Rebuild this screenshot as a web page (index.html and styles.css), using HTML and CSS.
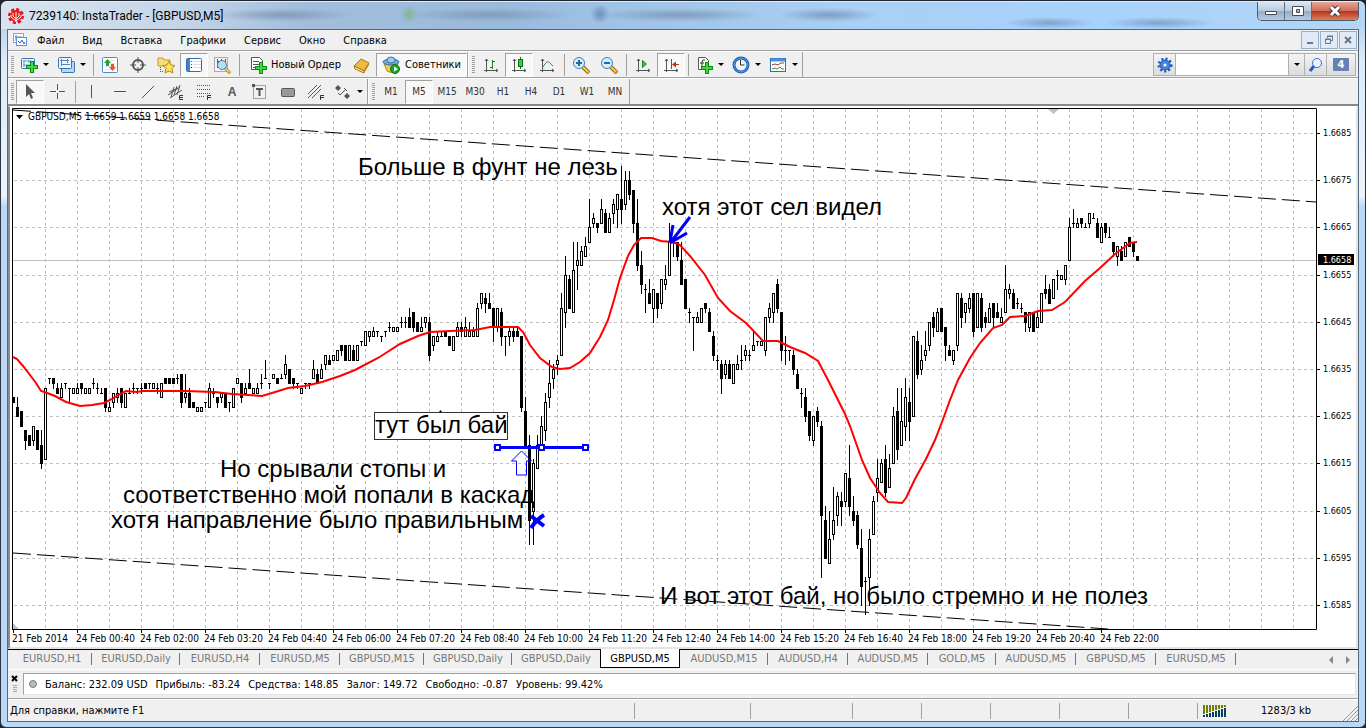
FILE: index.html
```html
<!DOCTYPE html>
<html lang="ru">

<head>
  <meta charset="utf-8">
  <title>7239140: InstaTrader - [GBPUSD,M5]</title>
  <link rel="stylesheet" href="styles.css">
</head>

<body>
  <svg class="sprite" aria-hidden="true">
    <symbol id="i-newchart" viewBox="0 0 18 18">
      <rect x="1.500" y="2.500" width="13" height="10" rx="1" fill="#eef6fd" stroke="#3b76ae"/>
      <path d="M4 4v7M3 9h10M3 5h8M9 4v3" stroke="#6a9cc8" fill="none"/>
      <path d="M10 5h4v4h4v4h-4v4h-4v-4H6V9h4z" fill="#0b8b14"/><path d="M11 6h2v4h4v2h-4v4h-2v-4H7v-2h4z" fill="#3ddb3c"/>
    </symbol>
    <symbol id="i-profiles" viewBox="0 0 18 18">
      <rect x="4.500" y="5.500" width="13" height="11" rx="1" fill="#b9d6f0" stroke="#3b76ae"/>
      <rect x="1.500" y="1.500" width="13" height="11" rx="1" fill="#eef6fd" stroke="#3b76ae"/>
      <path d="M4.500 3v7M3 4.500h9M4 8.500h9M10.500 3v4" stroke="#5586b5" fill="none"/>
    </symbol>
    <symbol id="i-market" viewBox="0 0 18 18">
      <rect x="1.500" y="1.500" width="15" height="15" rx="1" fill="#fff" stroke="#4a8ccb"/>
      <path d="M4 4.500h10M4 7.500h10M4 10.500h10M4 13.500h10" stroke="#dde8f2"/>
      <path d="M3 7l3.500-4L10 7H8v3H5V7z" fill="#22a32a"/><path d="M8 11l3.500 4 3.500-4h-2V8h-3v3z" fill="#e25a2c"/>
    </symbol>
    <symbol id="i-cross" viewBox="0 0 18 18"><circle cx="9" cy="9" r="5" fill="none" stroke="#555" stroke-width="2"/><path d="M9 1v6M9 11v6M1 9h6M11 9h6" stroke="#555"/></symbol>
    <symbol id="i-favs" viewBox="0 0 18 18">
      <path d="M1 2h5l1 2h6v6H1z" fill="#f7dc7c" stroke="#c99a2b"/><path d="M3.500 11v5M3 15.500h4" stroke="#555" stroke-dasharray="1 1" fill="none"/>
      <path d="M12 5l2 4 4 .5-3 3 1 4.500-4-2-4 2 1-4.500-3-3 4-.5z" fill="#ffe05a" stroke="#b98612"/>
    </symbol>
    <symbol id="i-data" viewBox="0 0 18 18">
      <rect x="1.500" y="2.500" width="15" height="13" rx="1" fill="#fff" stroke="#2f6db0"/><rect x="2" y="3" width="3" height="12" fill="#3f85cc"/>
      <path d="M6 5.500h1M6 8.500h1" stroke="#e02020"/><path d="M6 11.500h1" stroke="#123"/><path d="M8 5.500h8M8 8.500h8M8 11.500h8" stroke="#cfe0f0"/>
    </symbol>
    <symbol id="i-tester" viewBox="0 0 18 18">
      <rect x="1.500" y="1.500" width="13" height="14" fill="#f4f4f4" stroke="#aaa"/><path d="M4.500 3v9M8.500 3v3M12.500 3v5M4 5.500h3" stroke="#555"/>
      <path d="M12 12l5 5" stroke="#8a6a10" stroke-width="3"/><path d="M12 12l4.500 4.500" stroke="#f2cf4c" stroke-width="2"/><circle cx="9" cy="9" r="4.500" fill="#b9dcf5" stroke="#4b7fae"/>
    </symbol>
    <symbol id="i-order" viewBox="0 0 18 18">
      <path d="M2.500 1.500h8l3 3v9h-11z" fill="#fff" stroke="#555"/><path d="M4 5.500h6M4 8.500h6M4 11.500h4" stroke="#555"/>
      <path d="M10 6h4v4h4v4h-4v4h-4v-4H6v-4h4z" fill="#0b8b14"/><path d="M11 7h2v4h4v2h-4v4h-2v-4H7v-2h4z" fill="#3ddb3c"/>
    </symbol>
    <symbol id="i-book" viewBox="0 0 18 18"><path d="M1 10l7-7 8 4-5 8z" fill="#eebc3d" stroke="#a8720e"/><path d="M1 10l10 5v2L2 13z" fill="#fdf0c4" stroke="#a8720e"/><path d="M11 15l5-8v2l-5 8z" fill="#b97c12"/></symbol>
    <symbol id="i-advisor" viewBox="0 0 18 18">
      <path d="M2 8l3 7q4 3 8 0l3-7z" fill="#f0cb4a" stroke="#b98a1d"/>
      <ellipse cx="9" cy="6" rx="8" ry="3" fill="#68a9db" stroke="#3573ab"/><ellipse cx="9" cy="4" rx="4" ry="3" fill="#9ccbee" stroke="#3573ab"/>
      <circle cx="13" cy="13" r="4.500" fill="#1fa52a" stroke="#0c7315"/><path d="M12 10.500v5l4-2.500z" fill="#fff"/>
    </symbol>
    <symbol id="i-bars" viewBox="0 0 18 18"><path d="M4.500 3v13M2 14.500h14M3 5l1.500-2L6 5M14 13l2 1.500-2 1.500" stroke="#555" fill="none"/><path d="M10.500 4v9M8 11.500h3M10 5.500h3" stroke="#16852a" fill="none"/></symbol>
    <symbol id="i-candles" viewBox="0 0 18 18"><path d="M4.500 3v13M2 14.500h14M3 5l1.500-2L6 5M14 13l2 1.500-2 1.500" stroke="#555" fill="none"/><path d="M10.500 1v12" stroke="#0d6c18"/><rect x="8.500" y="3.500" width="4" height="7" fill="#35d43a" stroke="#0d6c18"/></symbol>
    <symbol id="i-line" viewBox="0 0 18 18"><path d="M4.500 3v13M2 14.500h14M3 5l1.500-2L6 5M14 13l2 1.500-2 1.500" stroke="#555" fill="none"/><path d="M5 11q4-8 7-4l3 3" stroke="#2b9a3a" fill="none"/></symbol>
    <symbol id="i-zoomin" viewBox="0 0 18 18"><path d="M11 11l6 6" stroke="#8a6a10" stroke-width="4"/><path d="M11 11l5.500 5.500" stroke="#f2cf4c" stroke-width="2"/><circle cx="7" cy="7" r="5.500" fill="#d8edfb" stroke="#3a80bd"/><path d="M4 7h6M7 4v6" stroke="#2567a4" stroke-width="2"/></symbol>
    <symbol id="i-zoomout" viewBox="0 0 18 18"><path d="M11 11l6 6" stroke="#8a6a10" stroke-width="4"/><path d="M11 11l5.500 5.500" stroke="#f2cf4c" stroke-width="2"/><circle cx="7" cy="7" r="5.500" fill="#d8edfb" stroke="#3a80bd"/><path d="M4 7h6" stroke="#2567a4" stroke-width="2"/></symbol>
    <symbol id="i-scroll" viewBox="0 0 18 18"><path d="M4.500 3v13M2 14.500h14M3 5l1.500-2L6 5M14 13l2 1.500-2 1.500" stroke="#555" fill="none"/><path d="M8.500 4.500v7l4-3.500z" fill="#35d43a" stroke="#16852a"/></symbol>
    <symbol id="i-shift" viewBox="0 0 18 18"><path d="M4.500 3v13M2 14.500h14M3 5l1.500-2L6 5M14 13l2 1.500-2 1.500M9.500 3v10" stroke="#555" fill="none"/><path d="M17 8.500h-5" stroke="#b8330b"/><path d="M10 8.500l4-3v6z" fill="#b8330b"/></symbol>
    <symbol id="i-indic" viewBox="0 0 18 18">
      <path d="M3.500 1.500h7l3 3v9h-10z" fill="#fff" stroke="#555"/><path d="M10 4q-3-1-3 2v5M5 7h4" stroke="#333" fill="none"/>
      <path d="M10 6h4v4h4v4h-4v4h-4v-4H6v-4h4z" fill="#0b8b14"/><path d="M11 7h2v4h4v2h-4v4h-2v-4H7v-2h4z" fill="#3ddb3c"/>
    </symbol>
    <symbol id="i-clock" viewBox="0 0 18 18"><circle cx="9" cy="9" r="7" fill="#eef6fd" stroke="#1d5cae" stroke-width="3"/><circle cx="9" cy="9" r="7" fill="none" stroke="#5aa2ea"/><path d="M8.500 4v5h4" stroke="#333" fill="none"/></symbol>
    <symbol id="i-template" viewBox="0 0 18 18"><rect x="1.500" y="2.500" width="15" height="13" fill="#fff" stroke="#2f6db0"/><path d="M2 4h14" stroke="#4b94dd" stroke-width="3"/><path d="M3 9l3-1 3 1 3-2h3" stroke="#a33a20" fill="none"/><path d="M3 13l3-1 2 1 3-2 2 2h2" stroke="#2b9a3a" fill="none"/></symbol>
    <symbol id="i-cursor" viewBox="0 0 18 18"><path d="M5 1l9 9h-4l2 5-2 1-2-5-3 3z" fill="#555"/></symbol>
    <symbol id="i-crosshair" viewBox="0 0 18 18"><path d="M8.500 1v6M8.500 10v6M1 8.500h6M10 8.500h6" stroke="#555"/></symbol>
    <symbol id="i-vline" viewBox="0 0 18 18"><path d="M8.500 2v13" stroke="#555"/></symbol>
    <symbol id="i-hline" viewBox="0 0 18 18"><path d="M3 8.500h12" stroke="#555"/></symbol>
    <symbol id="i-trend" viewBox="0 0 18 18"><path d="M3 15L15 3" stroke="#555"/></symbol>
    <symbol id="i-channel" viewBox="0 0 18 18"><path d="M1 12L13 4M3 15L15 7M4 14L7 4M7 12L10 3M10 12l3-10M2 9l9-4" stroke="#555"/><path d="M16 12.500h-3.500v4H16M13 14.500h3" stroke="#333" fill="none"/></symbol>
    <symbol id="i-fibo" viewBox="0 0 18 18"><path d="M2 2.500h13M2 6.500h13M2 10.500h13M2 13.500h8" stroke="#555" stroke-dasharray="1 1"/><path d="M16 12.500h-3.500V17M13 14.500h3" stroke="#333" fill="none"/></symbol>
    <symbol id="i-label" viewBox="0 0 18 18"><rect x="2.500" y="2.500" width="12" height="13" fill="none" stroke="#555" stroke-dasharray="1 1"/><path d="M5 6h7M8.500 6v7" stroke="#555" stroke-width="2"/><path d="M1 1h3v3H1z" fill="#555"/></symbol>
    <symbol id="i-rect" viewBox="0 0 18 18"><rect x="2.500" y="5.500" width="13" height="8" rx="1" fill="#999" stroke="#555"/></symbol>
    <symbol id="i-fan" viewBox="0 0 18 18"><path d="M1 11L10 2M1 15L14 2M5 15l9-9" stroke="#555"/><path d="M17 12.500h-3.500V17M14 14.500h3" stroke="#333" fill="none"/></symbol>
    <symbol id="i-arrows" viewBox="0 0 18 18"><path d="M1 5l3-3 3 3-3 3zM10 13l3-3 3 3-3 3z" fill="#555"/><path d="M4 10l2 2 6-6M10 5l3 3" stroke="#555" fill="none"/></symbol>
    <symbol id="i-gear" viewBox="0 0 16 16"><circle cx="8" cy="8" r="6" fill="none" stroke="#1f58b8" stroke-width="3" stroke-dasharray="2 2"/><circle cx="8" cy="8" r="5" fill="#4585dc" stroke="#1f58b8"/><circle cx="8" cy="8" r="1.500" fill="#fff"/></symbol>
    <symbol id="i-search" viewBox="0 0 16 16"><path d="M6 9l-4 5" stroke="#2a5bc0" stroke-width="3"/><circle cx="9" cy="6" r="4.500" fill="#eaf3fd" stroke="#3b6fd0"/></symbol>
    <symbol id="i-logo" viewBox="0 0 16 16"><circle cx="8" cy="8" r="6" fill="#e01a1a"/><circle cx="8" cy="8" r="6.500" fill="none" stroke="#e01a1a" stroke-width="3" stroke-dasharray="3 2"/><path d="M8 4v10M5 5v3l3 3M11 5v3l-3 3M3 7v2l5 4M13 7v2l-5 4" stroke="#fff" fill="none"/></symbol>
    <symbol id="i-doc" viewBox="0 0 16 16"><rect x="1.500" y="1.500" width="10" height="9" fill="#fff" stroke="#7aa7e8"/><path d="M4 3v6M3 5h7" stroke="#4c82d4"/><rect x="4.500" y="5.500" width="10" height="8" fill="#fff" stroke="#5e92dc"/><path d="M6 9l2 2 2-3 2 4 1-2" stroke="#3569c4" fill="none"/></symbol>
  </svg>

  <div class="window">
    <header class="titlebar">
      <svg class="logo"><use href="#i-logo"/></svg>
      <h1>7239140: InstaTrader - [GBPUSD,M5]</h1>
      <div class="haze"></div>
      <div class="caption">
        <button type="button" aria-label="Свернуть"><svg viewBox="0 0 14 12"><path d="M1.500 6.500h11v3h-11z" fill="#fff" stroke="#444a58"/></svg></button>
        <button type="button" aria-label="Развернуть"><svg viewBox="0 0 14 12"><path d="M1.500 1.500h11v9h-11zM5.500 4.500h3v3h-3z" fill="#fff" stroke="#444a58" fill-rule="evenodd"/></svg></button>
        <button type="button" class="close" aria-label="Закрыть"><svg viewBox="0 0 14 12"><path d="M3 2l8 8M11 2l-8 8" stroke="#4a3038" stroke-width="5"/><path d="M3 2l8 8M11 2l-8 8" stroke="#fff" stroke-width="3"/></svg></button>
      </div>
    </header>

    <div class="client">
      <nav class="menu">
        <svg><use href="#i-doc"/></svg>
        <button type="button">Файл</button>
        <button type="button">Вид</button>
        <button type="button">Вставка</button>
        <button type="button">Графики</button>
        <button type="button">Сервис</button>
        <button type="button">Окно</button>
        <button type="button">Справка</button>
        <div class="mdi">
          <button type="button" aria-label="Свернуть окно"><svg viewBox="0 0 10 10"><path d="M2 8h6" stroke="#66788a" stroke-width="2"/></svg></button>
          <button type="button" aria-label="Восстановить окно"><svg viewBox="0 0 10 10"><path d="M3.500 3V1.500h5v4H7M1.500 4.500h5v4h-5z" stroke="#66788a" fill="none"/><path d="M1 4h6M3 1h6" stroke="#66788a"/></svg></button>
          <button type="button" aria-label="Закрыть окно"><svg viewBox="0 0 10 10"><path d="M2 2l6 6M8 2l-6 6" stroke="#66788a" stroke-width="2"/></svg></button>
        </div>
      </nav>

      <div class="toolrow">
        <div class="toolbar">
          <button type="button" class="drop" aria-label="Новый график"><svg><use href="#i-newchart"/></svg></button>
          <button type="button" class="drop" aria-label="Профили"><svg><use href="#i-profiles"/></svg></button>
          <i class="sep"></i>
          <button type="button" aria-label="Обзор рынка"><svg><use href="#i-market"/></svg></button>
          <button type="button" aria-label="Окно данных"><svg><use href="#i-cross"/></svg></button>
          <button type="button" aria-label="Навигатор"><svg><use href="#i-favs"/></svg></button>
          <button type="button" class="on" aria-label="Терминал"><svg><use href="#i-data"/></svg></button>
          <button type="button" aria-label="Тестер стратегий"><svg><use href="#i-tester"/></svg></button>
          <i class="sep"></i>
          <button type="button" class="order"><svg><use href="#i-order"/></svg>Новый Ордер</button>
          <button type="button" aria-label="MetaEditor"><svg><use href="#i-book"/></svg></button>
          <button type="button" class="advisor on"><svg><use href="#i-advisor"/></svg>Советники</button>
        </div>
        <div class="toolbar">
          <button type="button" aria-label="Бары"><svg><use href="#i-bars"/></svg></button>
          <button type="button" class="on" aria-label="Свечи"><svg><use href="#i-candles"/></svg></button>
          <button type="button" aria-label="Линия"><svg><use href="#i-line"/></svg></button>
          <i class="sep"></i>
          <button type="button" aria-label="Увеличить"><svg><use href="#i-zoomin"/></svg></button>
          <button type="button" aria-label="Уменьшить"><svg><use href="#i-zoomout"/></svg></button>
          <i class="sep"></i>
          <button type="button" aria-label="Автопрокрутка"><svg><use href="#i-scroll"/></svg></button>
          <button type="button" class="on" aria-label="Сдвиг графика"><svg><use href="#i-shift"/></svg></button>
          <i class="sep"></i>
          <button type="button" class="drop" aria-label="Индикаторы"><svg><use href="#i-indic"/></svg></button>
          <button type="button" class="drop" aria-label="Периоды"><svg><use href="#i-clock"/></svg></button>
          <button type="button" class="drop" aria-label="Шаблоны"><svg><use href="#i-template"/></svg></button>
        </div>
        <form class="search">
          <button type="button" aria-label="Настройки"><svg><use href="#i-gear"/></svg></button>
          <input type="text" aria-label="Поиск">
          <button type="button" class="caret" aria-label="История"></button>
          <button type="button" aria-label="Найти"><svg><use href="#i-search"/></svg></button>
          <button type="button" class="msg"><span>4</span></button>
        </form>
      </div>

      <div class="toolrow">
        <div class="toolbar">
          <button type="button" class="on" aria-label="Курсор"><svg><use href="#i-cursor"/></svg></button>
          <button type="button" aria-label="Перекрестие"><svg><use href="#i-crosshair"/></svg></button>
          <i class="sep"></i>
          <button type="button" aria-label="Вертикальная линия"><svg><use href="#i-vline"/></svg></button>
          <button type="button" aria-label="Горизонтальная линия"><svg><use href="#i-hline"/></svg></button>
          <button type="button" aria-label="Трендовая линия"><svg><use href="#i-trend"/></svg></button>
          <button type="button" aria-label="Канал"><svg><use href="#i-channel"/></svg></button>
          <button type="button" aria-label="Фибоначчи"><svg><use href="#i-fibo"/></svg></button>
          <button type="button" class="letter">A</button>
          <button type="button" aria-label="Текстовая метка"><svg><use href="#i-label"/></svg></button>
          <button type="button" aria-label="Прямоугольник"><svg><use href="#i-rect"/></svg></button>
          <button type="button" aria-label="Веер"><svg><use href="#i-fan"/></svg></button>
          <button type="button" class="drop" aria-label="Стрелки"><svg><use href="#i-arrows"/></svg></button>
        </div>
        <div class="toolbar periods">
          <button type="button">M1</button>
          <button type="button" class="on">M5</button>
          <button type="button">M15</button>
          <button type="button">M30</button>
          <button type="button">H1</button>
          <button type="button">H4</button>
          <button type="button">D1</button>
          <button type="button">W1</button>
          <button type="button">MN</button>
        </div>
      </div>

      <main class="chart">
        <svg id="chart" viewBox="10 107 1346 540" role="img" aria-label="GBPUSD,M5">
          <g id="grid"></g>
          <path d="M12 260.500H1320" stroke="#c0c0c0"/>
          <path d="M1048 109h11l-5.500 5zM13 623v6h6z" fill="#c0c0c0"/>
          <g class="channel">
            <path d="M13 110L1316 202"/>
            <path d="M13 553L1108 629"/>
          </g>
          <g id="candles"></g>
          <polyline class="ma" points="13,357 17,359 23,366 30,375 36,383 41,391 47,393 55,396 66,402 80,406 92,405 104,403 112,399 118,395 126,391 137,392 143,391 185,391 215,392 232,394 262,396 272,393 288,388 305,386 322,382 340,376 355,370 378,358 400,344 418,336 430,332 450,331 475,330 490,327 518,327 523,332 530,345 540,358 552,367 560,369 570,368 580,362 590,353 600,337 608,320 614,300 620,278 628,256 634,245 641,238 652,238 661,241 672,242 680,245 690,256 705,275 718,298 730,311 746,323 763,341 778,341 790,347 805,353 818,361 828,380 845,414 850,426 862,460 870,478 880,493 888,502 902,503 906,498 915,479 926,459 935,440 942,422 950,400 958,380 970,358 980,343 993,328 1002,325 1010,317 1025,316 1038,311 1052,310 1065,302 1085,281 1100,268 1115,254 1130,243 1137,242"/>
          <path class="frame" d="M12.500 629V108.500H1316.500V629.500H12"/>
          <path d="M16 115h7l-3.500 4z"/>
          <text class="small" x="28" y="120">GBPUSD,M5 1.6659 1.6659 1.6658 1.6658</text>

          <rect x="374.500" y="412.500" width="133" height="27" fill="#fff" stroke="#333"/>
          <path d="M439 412l1.500-2 1.500 2z"/>
          <g class="note">
            <text x="358" y="175">Больше в фунт не лезь</text>
            <text x="662" y="215">хотя этот сел видел</text>
            <text x="375" y="433">тут был бай</text>
            <text x="220" y="477">Но срывали стопы и</text>
            <text x="123" y="503">соответственно мой попали в каскад</text>
            <text x="111" y="528">хотя направление было правильным</text>
            <text x="660" y="604">И вот этот бай, но было стремно и не полез</text>
          </g>

          <g class="blue">
            <path d="M497 447.500h89M690 217l-19 25M673 225l-3 17M687 233l-17 10" stroke-width="3"/>
            <path d="M521.500 451l-10 10h5v14h10v-14h5z" stroke-width="1"/>
            <path d="M531 516l13 10M544 515q-8 5-13 13" stroke-width="4"/>
          </g>
          <g class="knobs">
            <rect x="495" y="445" width="5" height="5"/>
            <rect x="539" y="445" width="5" height="5"/>
            <rect x="583" y="445" width="5" height="5"/>
          </g>
          <g id="axes" class="small"></g>
          <rect x="1318" y="254" width="36" height="11"/>
          <text class="price bid" x="1323" y="263">1.6658</text>
        </svg>
      </main>

      <nav class="tabs">
        <a href="#">EURUSD,H1</a>
        <a href="#" class="wide">EURUSD,Daily</a>
        <a href="#">EURUSD,H4</a>
        <a href="#">EURUSD,M5</a>
        <a href="#" class="mid">GBPUSD,M15</a>
        <a href="#" class="wide">GBPUSD,Daily</a>
        <a href="#" class="wide last">GBPUSD,Daily</a>
        <a href="#" class="active">GBPUSD,M5</a>
        <a href="#" class="wide">AUDUSD,M15</a>
        <a href="#">AUDUSD,H4</a>
        <a href="#">AUDUSD,M5</a>
        <a href="#" class="narrow">GOLD,M5</a>
        <a href="#">AUDUSD,M5</a>
        <a href="#">GBPUSD,M5</a>
        <a href="#">EURUSD,M5</a>
        <div class="arrows">
          <button type="button" aria-label="Назад"><svg viewBox="0 0 6 8"><path d="M5 0v8L1 4z" fill="#888"/></svg></button>
          <button type="button" aria-label="Вперёд"><svg viewBox="0 0 6 8"><path d="M1 0v8l4-4z" fill="#888"/></svg></button>
        </div>
      </nav>

      <section class="terminal">
        <button type="button" aria-label="Закрыть терминал"><svg viewBox="0 0 8 18"><path d="M1 1l5 5M6 1l-5 5" stroke="#000" stroke-width="2"/><path d="M2 10.500h4M2 12.500h4M2 14.500h4M2 16.500h4" stroke="#aaa"/></svg></button>
        <p><i class="dot"></i><span>Баланс: 232.09 USD</span><span>Прибыль: -83.24</span><span>Средства: 148.85</span><span>Залог: 149.72</span><span>Свободно: -0.87</span><span>Уровень: 99.42%</span></p>
      </section>

      <footer class="status">
        <span class="help">Для справки, нажмите F1</span>
        <span class="c1"></span>
        <span class="c2"></span>
        <span class="c3"></span>
        <span class="c3"></span>
        <span class="c3"></span>
        <span class="c3"></span>
        <span class="c3"></span>
        <span class="net"><svg id="signal" viewBox="0 0 24 12"></svg>1283/3 kb</span>
        <svg class="grip" viewBox="0 0 16 16"><path d="M1 16L16 1M5 16L16 5M9 16l7-7M13 16l3-3" stroke="#999"/></svg>
      </footer>
    </div>
  </div>
  <script src="chart.js"></script>
</body>

</html>
```
FILE: styles.css
```css
*,
*::before,
*::after {
  box-sizing: border-box;
}

body {
  margin: 0;
  min-height: 100vh;
  display: flex;
  background: #20242c;
  font-family: "DejaVu Sans Condensed", "Noto Sans", sans-serif;
  font-size: 11px;
  color: #000;
}

button {
  padding: 0;
  border: 0;
  background: none;
  font: inherit;
  color: inherit;
}

.sprite {
  position: absolute;
  width: 0;
  height: 0;
}

.window {
  flex: 1;
  min-width: 0;
  margin-top: 1px;
  display: flex;
  flex-direction: column;
  padding: 0 6px 5px;
  border: 1px solid #2c3540;
  border-top: 0;
  border-radius: 7px 7px 6px 6px;
  background: linear-gradient(180deg, #a8c4e2 0, #dcebfa 60px, #eaf4fd 195px, #b9d8f8 205px, #b9d8f8 100%);
}

/* title bar */
.titlebar {
  display: flex;
  align-items: center;
  height: 28px;
  margin: 0 -6px;
  padding-left: 7px;
  border-radius: 6px 6px 0 0;
  background: linear-gradient(90deg, #d9e4f0 0, #c4d5e8 180px, #a3bedb 300px, #9abadc 500px, #9fc3e6 620px, #a9d0f5 860px, #a6d2fb 1100px, #b5d6f5 1366px);
  border-top: 1px solid #e2edf8;
}

.titlebar .logo {
  width: 16px;
  height: 16px;
}

.titlebar h1 {
  margin: 0 0 0 5px;
  font: 12px Roboto, sans-serif;
  white-space: nowrap;
}

.haze {
  flex: 1;
  align-self: stretch;
  background:
    radial-gradient(circle at 185px 12px, #7fb592 0, transparent 9px),
    radial-gradient(circle at 376px 12px, #6f8fbd 0, transparent 10px),
    radial-gradient(ellipse 70px 7px at 60px 13px, #809cba 0, transparent 100%),
    radial-gradient(ellipse 85px 7px at 265px 13px, #809cba 0, transparent 100%),
    radial-gradient(ellipse 85px 7px at 455px 13px, #809cba 0, transparent 100%),
    radial-gradient(ellipse 50px 7px at 605px 13px, #7f9cc0 0, transparent 100%),
    radial-gradient(ellipse 45px 6px at 825px 21px, #7fa4cc 0, transparent 100%),
    radial-gradient(ellipse 55px 6px at 935px 21px, #7fa4cc 0, transparent 100%);
}

.caption {
  display: flex;
  align-self: flex-start;
  height: 19px;
  margin-right: 6px;
  border: 1px solid #4c5c70;
  border-top: 0;
  border-radius: 0 0 5px 5px;
  overflow: hidden;
}

.caption button {
  display: flex;
  align-items: center;
  justify-content: center;
  width: 27px;
  border-right: 1px solid #5d6f86;
  background: linear-gradient(#dbe6f2, #b8c9dc 50%, #95abc4 50%, #b4cde6);
}

.caption svg {
  width: 14px;
  height: 12px;
}

.caption .close {
  width: 46px;
  border-right: 0;
  background: linear-gradient(#e7a799, #cf6c58 50%, #b8321c 50%, #d9805c);
}

.client {
  flex: 1;
  display: flex;
  flex-direction: column;
  border: 1px solid #56687c;
  background: #f0f0f0;
}

/* menu */
.menu {
  display: flex;
  align-items: center;
  height: 21px;
  padding-left: 4px;
  border-bottom: 1px solid #a0a0a0;
}

.menu > svg {
  width: 16px;
  height: 16px;
}

.menu > button {
  padding: 0 9px;
}

.mdi {
  display: flex;
  gap: 1px;
  margin-left: auto;
  padding-right: 1px;
}

.mdi button {
  display: flex;
  align-items: center;
  justify-content: center;
  width: 18px;
  height: 18px;
  border: 1px solid #9ab0c4;
  background: #e0ebf7;
}

.mdi svg {
  width: 10px;
  height: 10px;
}

/* toolbars */
.toolrow {
  display: flex;
  height: 27px;
  border-bottom: 1px solid #a0a0a0;
  border-top: 1px solid #fff;
}

.toolrow + .toolrow {
  height: 28px;
  border-bottom: 2px solid #888;
}

.toolbar {
  display: flex;
  align-items: center;
  padding-left: 8px;
  border-right: 1px solid #a0a0a0;
  background: repeating-linear-gradient(#a0a0a0 0 1px, transparent 1px 2px) 3px 4px / 3px 18px no-repeat;
}

.toolbar + .toolbar {
  border-left: 1px solid #fff;
}

.toolbar button {
  display: flex;
  align-items: center;
  justify-content: center;
  width: 28px;
  height: 24px;
}

.toolbar button.on {
  border: 1px solid #a0a0a0;
  border-right-color: #fff;
  border-bottom-color: #fff;
  background: #f8f8f8;
}

.toolbar svg {
  width: 18px;
  height: 18px;
}

.toolbar .drop {
  width: 37px;
  gap: 5px;
}

.drop::after,
.caret::after {
  content: "";
  border: 3px solid transparent;
  border-top-color: #000;
  border-bottom: 0;
}

.sep {
  width: 1px;
  height: 22px;
  margin: 0 2px 0 3px;
  background: #a0a0a0;
}

.toolbar .order {
  width: 106px;
  gap: 4px;
}

.toolbar .advisor {
  width: 91px;
  gap: 5px;
}

.toolbar .letter {
  font: bold 12px "Liberation Sans", sans-serif;
  color: #555;
}

.periods button {
  font-size: 10px;
  color: #333;
}

.search {
  display: flex;
  height: 23px;
  margin: 1px 2px 0 auto;
  border: 1px solid #b0b0b0;
}

.search button {
  display: flex;
  align-items: center;
  justify-content: center;
  width: 22px;
  border-right: 1px solid #b0b0b0;
  background: linear-gradient(#f4f4f4, #dcdcdc);
}

.search svg {
  width: 16px;
  height: 16px;
}

.search input {
  width: 113px;
  border: 0;
  border-right: 1px solid #b0b0b0;
  background: #fff;
}

.search .caret {
  width: 16px;
}

.search .msg {
  width: 28px;
  border-right: 0;
}

.msg span {
  width: 16px;
  height: 13px;
  border-radius: 1px;
  background: #6480b4;
  color: #fff;
  font-weight: bold;
  line-height: 13px;
}

/* chart */
.chart {
  flex: 1;
  border: 2px solid #e4e4e4;
  border-top: 1px solid #fff;
  border-left-color: #8c8c8c;
  background: #fff;
}

.chart svg {
  display: block;
  width: 100%;
}

.channel path {
  fill: none;
  stroke: #000;
  stroke-dasharray: 18 6;
}

#candles {
  shape-rendering: crispEdges;
}

.ma {
  fill: none;
  stroke: #f00;
  stroke-width: 2;
}

.frame {
  fill: none;
  stroke: #000;
}

.small {
  font-size: 10px;
}

.price {
  font-size: 9px;
}

.bid {
  fill: #fff;
}

.note {
  font: 24px "Liberation Sans", Arial, sans-serif;
}

.blue {
  fill: none;
  stroke: #00f;
}

.knobs {
  fill: #fff;
  stroke: #00f;
  stroke-width: 2;
}

/* chart tabs */
.tabs {
  display: flex;
  height: 20px;
  padding-left: 4px;
  border-top: 1px solid #000;
}

.tabs a {
  position: relative;
  min-width: 80px;
  height: 18px;
  color: #777;
  line-height: 18px;
  text-align: center;
  text-decoration: none;
}

.tabs a::after {
  content: "";
  position: absolute;
  right: 0;
  top: 3px;
  height: 12px;
  border-right: 1px solid #777;
}

.tabs .wide {
  min-width: 88px;
}

.tabs .mid {
  min-width: 84px;
}

.tabs .narrow {
  min-width: 68px;
}

.tabs .active {
  margin-top: -1px;
  height: 19px;
  border: 1px solid #000;
  border-top: 0;
  background: #fff;
  color: #000;
  line-height: 20px;
}

.tabs .active::after,
.tabs .last::after {
  display: none;
}

.arrows {
  display: flex;
  gap: 11px;
  align-items: center;
  margin-left: auto;
  padding-right: 7px;
}

.arrows svg {
  display: block;
  width: 6px;
  height: 8px;
}

/* account line */
.terminal {
  display: flex;
  height: 30px;
  padding: 3px 2px 3px 3px;
  border-top: 1px solid #fff;
  border-bottom: 1px solid #a0a0a0;
}

.terminal button {
  width: 8px;
  margin-right: 4px;
}

.terminal svg {
  display: block;
  width: 8px;
  height: 18px;
}

.terminal p {
  flex: 1;
  display: flex;
  align-items: center;
  gap: 8px;
  margin: 0;
  padding-left: 5px;
  border: 1px solid #a0a0a0;
  border-right-color: #e4e4e4;
  border-bottom-color: #e4e4e4;
  background: #fff;
}

.dot {
  width: 8px;
  height: 8px;
  border: 1px solid #777;
  border-radius: 50%;
  background: #bbb;
}

/* status bar */
.status {
  display: flex;
  align-items: center;
  height: 22px;
  border-top: 1px solid #fff;
}

.status span {
  border-right: 1px solid #a0a0a0;
  height: 16px;
  line-height: 16px;
}

.status .help {
  flex: 1;
  padding-left: 2px;
}

.status .c1 {
  width: 116px;
}

.status .c2 {
  width: 102px;
}

.status .c3 {
  width: 69px;
}

.status .net {
  display: flex;
  gap: 34px;
  width: 144px;
  padding-left: 5px;
  border-right: 0;
}

.net svg {
  width: 24px;
  height: 12px;
  margin-top: 2px;
}

.grip {
  width: 16px;
  height: 16px;
  align-self: flex-end;
}
```
FILE: chart.js
```js
// high open close low, in pips over 1.6600, one bar every 4px
const BARS = `
29 29 28 28|29 27 25 25|26 26 23 23|22 22 20 18|21 21 19 19|23 20 23 19|22 22 18 18|22 19 15 14|31 16 31 16|33 33 33 32
33 33 32 31|32 31 30 30|32 29 31 29|32 32 32 31|31 31 31 28|31 30 31 30|32 30 31 30|32 32 31 30|31 30 31 30|31 30 31 30
33 32 32 31|32 31 31 30|31 30 30 30|31 31 27 26|28 26 27 26|30 28 30 27|31 29 30 28|31 31 28 27|30 27 30 27|31 30 30 30
32 31 31 30|31 31 31 30|32 31 31 30|32 32 31 31|32 32 32 31|32 31 32 31|32 31 31 30|32 29 32 29|33 33 32 32|33 33 32 32
33 33 32 32|34 33 33 32|34 34 28 27|34 29 30 28|31 30 27 27|28 28 27 27|27 26 27 26|27 26 27 26|28 28 28 27|32 27 31 27
31 30 30 29|29 29 28 27|30 29 30 28|30 30 27 27|28 28 28 26|31 27 31 27|33 32 33 32|32 32 29 28|32 30 31 30|35 32 31 31
31 30 31 30|32 30 31 30|34 32 32 31|37 33 33 33|32 32 32 31|34 33 34 33|33 33 32 32|34 33 33 33|38 34 36 33|35 35 32 32
33 33 32 31|32 32 32 31|31 30 31 30|32 32 32 31|32 32 32 31|37 33 35 33|35 34 32 32|36 33 35 33|38 36 38 35|38 37 36 36
38 37 38 37|39 37 39 37|40 40 39 38|40 40 37 37|40 37 40 37|40 39 37 37|40 37 40 37|41 41 41 40|43 40 43 40|43 42 43 41
44 42 43 42|43 43 43 42|42 42 42 41|43 43 43 42|45 44 44 43|44 43 44 43|44 43 44 43|46 45 45 44|46 45 45 44|48 46 44 44
47 47 44 43|45 45 43 43|46 43 44 43|46 45 46 44|46 45 38 37|42 40 42 39|43 41 42 41|43 42 42 42|43 43 42 42|42 42 40 40
42 39 42 39|45 42 44 42|45 44 43 42|46 42 44 42|45 42 43 42|44 42 43 42|49 42 48 42|51 49 51 48|51 50 49 47|51 49 48 48
48 48 44 41|48 44 48 43|48 47 42 40|42 42 42 38|44 42 43 40|44 43 42 41|44 43 42 42|42 42 27 26|29 26 19 19|21 19 3 -2
16 5 15 -2|21 14 19 14|25 19 23 18|30 22 28 20|37 29 32 27|36 33 35 31|38 36 37 34|51 38 48 38|59 47 55 44|55 54 48 48
62 47 56 47|62 57 58 52|61 57 60 57|63 59 61 59|71 62 65 62|68 66 67 65|66 66 65 64|71 66 69 66|69 68 64 64|68 64 67 64
71 68 70 66|72 69 72 65|78 71 69 66|77 70 75 69|77 75 72 71|73 73 66 64|71 66 57 56|60 57 53 51|53 52 52 47|54 51 49 49
52 48 52 45|51 51 48 46|54 49 54 48|57 53 54 52|66 55 62 55|63 62 62 59|62 62 59 58|62 58 53 53|54 54 48 48|48 47 47 45
46 46 46 39|47 45 46 45|48 45 48 45|49 49 48 47|48 47 43 43|43 42 38 37|38 37 37 35|37 36 33 30|37 34 36 33|37 36 33 33
36 32 36 32|38 35 36 35|40 37 37 35|40 38 39 37|39 38 38 37|43 39 40 39|41 41 41 40|41 40 41 40|46 39 46 38|49 46 48 45
51 47 51 45|54 53 48 47|47 47 39 37|42 39 39 36|39 39 39 37|39 38 35 34|35 34 31 31|31 30 30 27|31 29 25 24|26 26 21 20
25 20 25 19|27 26 24 23|24 23 4 -9|6 3 -5 -5|5 -6 -1 -6|10 0 3 -1|9 4 8 2|9 7 6 2|13 7 13 6|19 12 6 4
8 5 3 2|5 4 -2 -3|1 -3 -11 -15|-9 -10 -10 -17|1 -9 -1 -15|8 0 7 0|16 9 12 7|16 11 15 11|19 16 9 8|17 10 14 10
27 15 25 15|31 26 18 16|31 19 24 19|33 23 29 20|31 28 24 20|42 25 42 25|43 41 34 33|40 35 37 34|43 38 39 37|45 40 45 39
47 46 44 42|48 43 47 43|48 48 43 43|44 44 40 37|40 39 38 38|39 37 39 36|51 40 51 39|51 50 46 44|49 47 49 45|51 48 50 47
51 51 43 42|51 44 51 44|51 50 44 43|47 46 45 44|49 45 48 45|49 49 46 44|49 47 46 46|48 45 46 45|57 47 52 47|53 51 52 50
52 51 48 48|50 49 49 48|49 48 48 47|47 47 45 43|47 44 47 43|47 47 43 43|47 44 46 44|51 45 51 45|55 52 51 50|53 52 49 49
54 50 54 50|56 55 55 52|55 54 55 54|57 54 57 53|67 58 65 58|69 66 66 65|67 65 66 65|67 67 66 65|66 65 65 65|68 66 68 65
68 67 67 67|67 66 63 63|66 62 65 62|66 66 64 63|65 63 63 63|62 62 60 59|61 59 61 57|61 60 58 58|62 59 62 59|63 63 61 61
62 62 60 59|59 59 58 58`;

const TIMES = ["21 Feb 2014", "24 Feb 00:40", "24 Feb 02:00", "24 Feb 03:20", "24 Feb 04:40", "24 Feb 06:00",
  "24 Feb 07:20", "24 Feb 08:40", "24 Feb 10:00", "24 Feb 11:20", "24 Feb 12:40", "24 Feb 14:00",
  "24 Feb 15:20", "24 Feb 16:40", "24 Feb 18:00", "24 Feb 19:20", "24 Feb 20:40", "24 Feb 22:00"];

const yOf = (pip) => Math.round(133 + (85 - pip) * 4.72);

const add = (parent, tag, attrs, text) => {
  const el = document.createElementNS("http://www.w3.org/2000/svg", tag);
  for (const key in attrs) el.setAttribute(key, attrs[key]);
  if (text) el.textContent = text;
  parent.appendChild(el);
}

const drawGrid = () => {
  const grid = document.getElementById("grid");
  const axes = document.getElementById("axes");
  const dash = { stroke: "#c0c0c0", "stroke-dasharray": "3 3" };

  for (let x = 45; x < 1316; x += 32) {
    add(grid, "path", { d: `M${x + 0.5} 109V629`, ...dash });
  }
  for (let pip = 85; pip >= -15; pip -= 10) {
    const y = yOf(pip);
    add(grid, "path", { d: `M14 ${y + 0.5}H1316`, ...dash });
    add(axes, "path", { d: `M1317 ${y + 0.5}h3`, stroke: "#000" });
    add(axes, "text", { class: "price", x: 1323, y: y + 3 }, (1.66 + pip / 10000).toFixed(4));
  }
  TIMES.forEach((time, i) => {
    add(axes, "path", { d: `M${13.5 + i * 64} 630v3`, stroke: "#000" });
    add(axes, "text", { x: 12 + i * 64, y: 642 }, time);
  })
}

const drawCandles = () => {
  const layer = document.getElementById("candles");

  BARS.trim().split(/[|\n]/).forEach((bar, i) => {
    const [high, open, close, low] = bar.split(" ").map(Number);
    const x = 13 + i * 4;
    const top = yOf(Math.max(open, close));
    const height = yOf(Math.min(open, close)) - top + 1;

    add(layer, "rect", { x, y: yOf(high), width: 1, height: yOf(low) - yOf(high) + 1 });
    add(layer, "rect", { x: x - 1, y: top, width: 3, height });
    if (close > open) {
      add(layer, "rect", { x, y: top + 1, width: 1, height: height - 2, fill: "#fff" });
    }
  })
}

const drawSignal = () => {
  const signal = document.getElementById("signal");

  for (let i = 0; i < 8; i++) {
    add(signal, "rect", { x: i * 3, y: 0, width: 2, height: 9 - i, fill: "#6b8000" });
    add(signal, "rect", { x: i * 3, y: 10 - i, width: 2, height: 2 + i, fill: "#0c3f5f" });
  }
}

drawGrid();
drawCandles();
drawSignal();
```
